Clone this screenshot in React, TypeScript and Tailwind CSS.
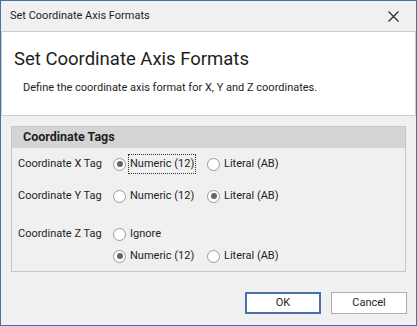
import React from 'react';

const font = { fontFamily: 'Roboto, "Noto Sans", sans-serif' };

function Radio({ checked, label, focused }: { checked?: boolean; label: string; focused?: boolean }) {
  return (
    <div className="flex items-center w-[94px]">
      <span className="w-[13px] h-[13px] rounded-full border border-[#9a9a9a] bg-white flex items-center justify-center shrink-0">
        {checked && <span className="w-[6px] h-[6px] rounded-full bg-[#666]" />}
      </span>
      <span
        className={
          'ml-[3px] px-[1px] leading-[18px] ' +
          (focused ? 'outline outline-1 outline-dotted outline-[#333]' : '')
        }
      >
        {label}
      </span>
    </div>
  );
}

function Row({ label, children }: { label: string; children: React.ReactNode }) {
  return (
    <div className="flex items-center">
      <span className="w-[95px] shrink-0">{label}</span>
      <div className="flex flex-col gap-[4px]">{children}</div>
    </div>
  );
}

export default function App() {
  return (
    <div
      className="w-[417px] h-[326px] border border-[#4a6ea9] bg-[#f0f0f0] flex flex-col text-[11px] text-[#1e1e1e]"
      style={font}
    >
      {/* title bar */}
      <div className="h-[30px] flex items-center justify-between pl-[9px] pr-[17px] text-[11px]">
        <span>Set Coordinate Axis Formats</span>
        <svg width="11" height="11" viewBox="0 0 11 11" className="stroke-[#222]">
          <path d="M0.5 0.5 L10.5 10.5 M10.5 0.5 L0.5 10.5" strokeWidth="1.1" />
        </svg>
      </div>

      {/* header panel */}
      <div className="bg-white border border-[#cfcfcf] h-[85px] pl-[12px] pt-[14px]">
        <div className="text-[18.5px] leading-[26px]">Set Coordinate Axis Formats</div>
        <div className="pl-[9px] mt-[8px]">Define the coordinate axis format for X, Y and Z coordinates.</div>
      </div>

      {/* group box */}
      <div className="mx-[10px] mt-[10px] border border-[#c6c6c6] h-[146px] flex flex-col">
        <div className="bg-[#d4d4d4] h-[21px] flex items-center pl-[11px] font-bold text-[12.5px]">Coordinate Tags</div>
        <div className="pl-[6px] pt-[7px] flex flex-col gap-[14px]">
          <Row label="Coordinate X Tag">
            <div className="flex">
              <Radio checked focused label="Numeric (12)" />
              <Radio label="Literal (AB)" />
            </div>
          </Row>
          <Row label="Coordinate Y Tag">
            <div className="flex">
              <Radio label="Numeric (12)" />
              <Radio checked label="Literal (AB)" />
            </div>
          </Row>
          <div className="flex mt-[6px]">
            <span className="w-[95px] shrink-0 leading-[18px]">Coordinate Z Tag</span>
            <div className="flex flex-col gap-[4px]">
              <Radio label="Ignore" />
              <div className="flex">
                <Radio checked label="Numeric (12)" />
                <Radio label="Literal (AB)" />
              </div>
            </div>
          </div>
        </div>
      </div>

      {/* buttons */}
      <div className="flex justify-end gap-[10px] pr-[9px] mt-[20px]">
        <button className="w-[76px] h-[22px] border-2 border-[#4a6ea9] bg-white">OK</button>
        <button className="w-[76px] h-[22px] border border-[#adadad] bg-white">Cancel</button>
      </div>
    </div>
  );
}
